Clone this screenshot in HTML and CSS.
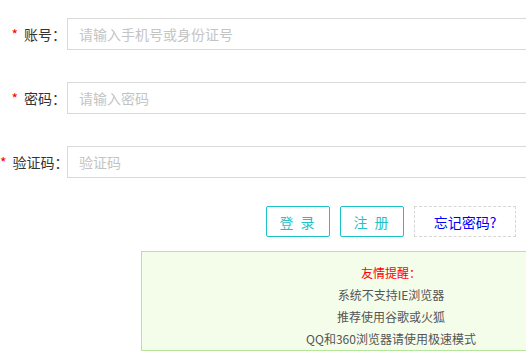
FILE: index.html
```html
<!DOCTYPE html>
<html lang="zh-CN">
<head>
	<meta charset="UTF-8">
	<title>登录</title>
	<link rel="stylesheet" href="styles.css">
</head>
<body>
	<form class="login">
		<div class="row">
			<label class="label"><span class="star">*</span>账号：</label>
			<input class="field" type="text" placeholder="请输入手机号或身份证号">
		</div>
		<div class="row">
			<label class="label"><span class="star">*</span>密码：</label>
			<input class="field" type="password" placeholder="请输入密码">
		</div>
		<div class="row">
			<label class="label"><span class="star">*</span>验证码：</label>
			<input class="field" type="text" placeholder="验证码">
		</div>
		<div class="actions">
			<button class="btn" type="button">登 录</button>
			<button class="btn" type="button">注 册</button>
			<a class="forget" href="#">忘记密码?</a>
		</div>
		<div class="tips">
			<p class="tips-title">友情提醒：</p>
			<p>系统不支持IE浏览器</p>
			<p>推荐使用谷歌或火狐</p>
			<p>QQ和360浏览器请使用极速模式</p>
		</div>
	</form>
</body>
</html>
```

FILE: styles.css
```css
*{
	margin: 0px;
	padding: 0px;
	box-sizing: border-box;
}
body{
	font-family: "Noto Sans CJK SC", "Liberation Sans", sans-serif;
	font-size: 14px;
	color: #333;
	background-color: #fff;
	overflow: hidden;
}
.login{
	width: 700px;
	padding-top: 18px;
}
.row{
	display: flex;
	align-items: center;
	margin-bottom: 32px;
}
.label{
	width: 67px;
	padding-right: 1px;
	text-align: right;
	white-space: nowrap;
}
.star{
	color: #f00;
	margin-right: 6px;
}
.field{
	width: 480px;
	height: 32px;
	border: 1px solid #d9d9d9;
	padding: 0 11px;
	font-family: inherit;
	font-size: 14px;
	color: #333;
	outline: none;
}
.field::placeholder{
	color: #c4c4c4;
}
.actions{
	display: flex;
	gap: 10px;
	margin-top: -4px;
	padding-left: 266px;
}
.btn{
	width: 64px;
	height: 31px;
	border: 1px solid #1cc2c7;
	border-radius: 2px;
	background-color: #fff;
	color: #1cc2c7;
	font-family: inherit;
	font-size: 14px;
	letter-spacing: 2px;
}
.forget{
	width: 102px;
	height: 31px;
	border: 1px dashed #d6d6d6;
	color: #00f;
	text-decoration: none;
	font-size: 14px;
	display: flex;
	align-items: center;
	justify-content: center;
}
.tips{
	width: 500px;
	height: 100px;
	margin: 14px 0 0 141px;
	padding-top: 10px;
	border: 1px solid #b5e59a;
	background-color: #f4fdea;
	text-align: center;
	font-size: 12px;
	line-height: 22px;
	color: #555;
}
.tips-title{
	color: #f00;
}
```
